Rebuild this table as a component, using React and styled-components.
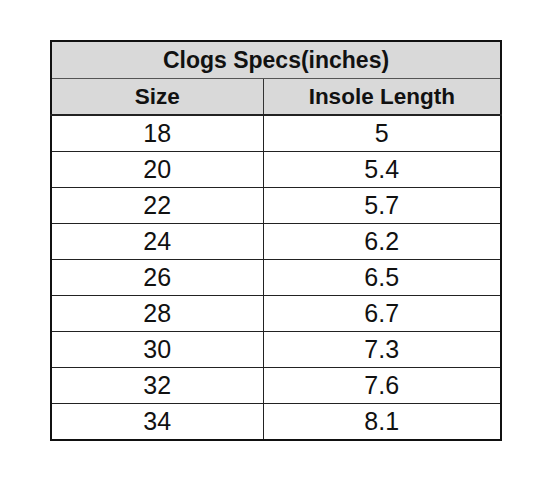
import styled, { createGlobalStyle } from "styled-components";

const GlobalStyle = createGlobalStyle`
  html, body {
    margin: 0;
    padding: 0;
    background: #ffffff;
  }
`;

const Page = styled.div`
  width: 540px;
  height: 500px;
  padding-top: 40px;
  padding-left: 50px;
  box-sizing: border-box;
`;

const Table = styled.table`
  width: 452px;
  border-collapse: collapse;
  border: 2px solid #111;
  table-layout: fixed;
`;

const HeadCell = styled.th`
  background: #d9d9d9;
  height: ${(props) => (props.title ? "36px" : "35px")};
  padding: 0;
  border: 1px solid #333;
  border-bottom: ${(props) => (props.title ? "1px solid #555" : "2px solid #222")};
  font-family: "Liberation Sans", Arial, sans-serif;
  font-weight: 700;
  font-size: ${(props) => (props.title ? "23px" : "22.5px")};
  color: #111;
  text-align: center;
  vertical-align: middle;
`;

const Cell = styled.td`
  height: 35px;
  padding: 0;
  border: 1px solid #222;
  font-family: "Liberation Sans", Arial, sans-serif;
  font-size: 25px;
  color: #111;
  text-align: center;
  vertical-align: middle;
`;

const specs = [
  ["18", "5"],
  ["20", "5.4"],
  ["22", "5.7"],
  ["24", "6.2"],
  ["26", "6.5"],
  ["28", "6.7"],
  ["30", "7.3"],
  ["32", "7.6"],
  ["34", "8.1"],
];

const App = () => {
  return (
    <Page>
      <GlobalStyle />
      <Table>
        <colgroup>
          <col style={{ width: "212px" }} />
          <col />
        </colgroup>
        <thead>
          <tr>
            <HeadCell title colSpan={2}>
              Clogs Specs(inches)
            </HeadCell>
          </tr>
          <tr>
            <HeadCell>Size</HeadCell>
            <HeadCell>Insole Length</HeadCell>
          </tr>
        </thead>
        <tbody>
          {specs.map(([size, length]) => (
            <tr key={size}>
              <Cell>{size}</Cell>
              <Cell>{length}</Cell>
            </tr>
          ))}
        </tbody>
      </Table>
    </Page>
  );
};

export default App;
